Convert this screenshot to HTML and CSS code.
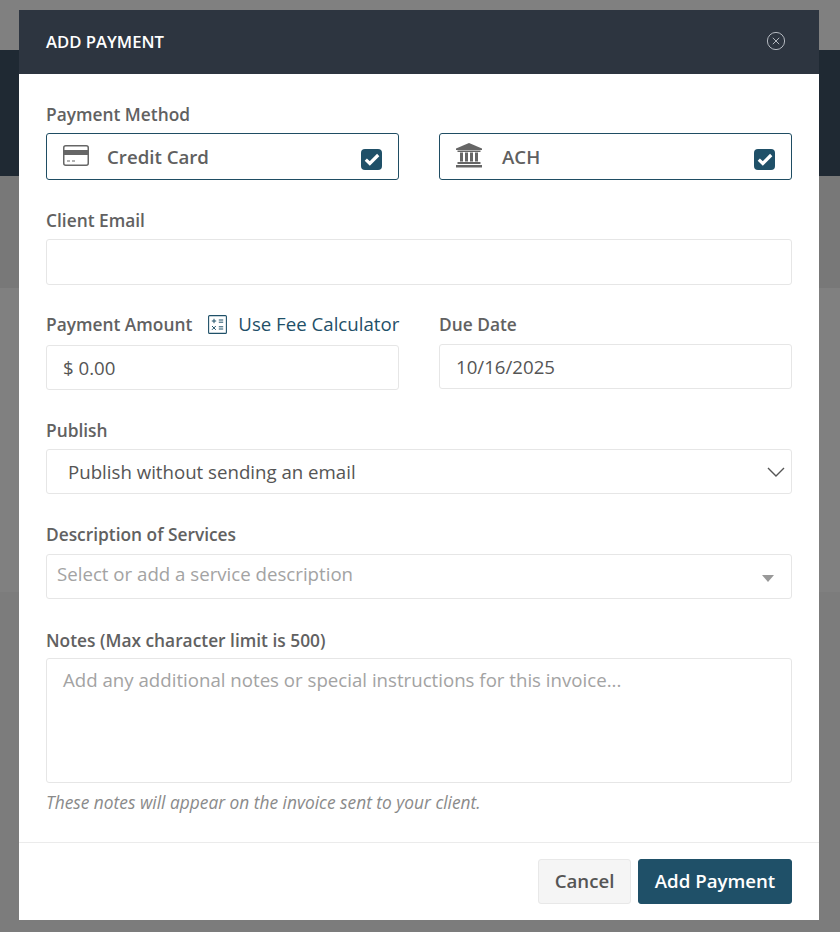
FILE: index.html
```html
<!DOCTYPE html>
<html lang="en">
<head>
<meta charset="utf-8">
<title>Add Payment</title>
<link rel="stylesheet" href="styles.css">
</head>
<body>
<div class="backdrop">
  <div class="bg-top"></div>
  <div class="bg-hero"></div>
  <div class="bg-mid"></div>
  <div class="bg-main"></div>
  <div class="bg-bottom"></div>
</div>
<div class="modal">
  <header class="modal-head">
    <h1>ADD PAYMENT</h1>
    <svg class="close" width="20" height="20" viewBox="0 0 20 20" fill="none" stroke="#b4b9c0"><circle cx="10" cy="10" r="8.6" stroke-width="1"/><path d="M6.8 6.8l6.4 6.4M13.2 6.8l-6.4 6.4" stroke-width="1"/></svg>
  </header>
  <div class="modal-body">
    <div class="label l-method">Payment Method</div>
    <div class="two">
      <div class="method">
        <svg class="m-icon" width="26" height="21" viewBox="0 0 26 21"><rect x="0.75" y="0.75" width="24.5" height="19.5" rx="2" fill="none" stroke="#666" stroke-width="1.5"/><rect x="1" y="5" width="24" height="5" fill="#666"/><path d="M4 16h3M9 16h3" stroke="#666" stroke-width="1.2"/></svg>
        <span class="m-name m-card">Credit Card</span>
        <span class="check"><svg width="16" height="13" viewBox="0 0 16 13"><path d="M1.8 6.6l4 3.8 8.400-8.400" fill="none" stroke="#fff" stroke-width="3.200"/></svg></span>
      </div>
      <div class="method">
        <svg class="m-icon" width="26" height="25" viewBox="0 0 26 25" fill="#666"><path d="M13 0L26 5.500V7H0V5.500z"/><rect x="1.500" y="7.500" width="23" height="1.500"/><rect x="4" y="9.500" width="3" height="9"/><rect x="9" y="9.500" width="3" height="9"/><rect x="14" y="9.500" width="3" height="9"/><rect x="19" y="9.500" width="3" height="9"/><rect x="1.500" y="19" width="23" height="2"/><rect x="0" y="22" width="26" height="2.500"/></svg>
        <span class="m-name m-ach">ACH</span>
        <span class="check"><svg width="16" height="13" viewBox="0 0 16 13"><path d="M1.800 6.600l4 3.800 8.400-8.400" fill="none" stroke="#fff" stroke-width="3.200"/></svg></span>
      </div>
    </div>
    <div class="label l-email">Client Email</div>
    <div class="field email"></div>
    <div class="two amount-row">
      <div>
        <div class="label-row">
          <span class="label">Payment Amount</span>
          <svg class="calc" width="19" height="19" viewBox="0 0 19 19" fill="none" stroke="#1f5068"><rect x="0.600" y="0.600" width="17.800" height="17.800" rx="1" stroke-width="1.100"/><path d="M3.800 6h4.400M6 3.800v4.400M10.800 5h4.400M10.800 7.200h4.400M4 11l3.800 3.800M7.800 11l-3.800 3.800M10.800 11.800h4.400M10.800 14h4.400" stroke-width="1"/></svg>
          <span class="link">Use Fee Calculator</span>
        </div>
        <div class="field text amount">$ 0.00</div>
      </div>
      <div>
        <div class="label due">Due Date</div>
        <div class="field text date">10/16/2025</div>
      </div>
    </div>
    <div class="label l-publish">Publish</div>
    <div class="field text select">
      <span>Publish without sending an email</span>
      <svg width="18" height="10" viewBox="0 0 18 10"><path d="M1 1l8 8 8-8" fill="none" stroke="#555" stroke-width="1.400"/></svg>
    </div>
    <div class="label l-desc">Description of Services</div>
    <div class="field text combo">
      <span class="combo-text">Select or add a service description</span>
      <i class="caret"></i>
    </div>
    <div class="label l-notes">Notes (Max character limit is 500)</div>
    <div class="field text notes">Add any additional notes or special instructions for this invoice...</div>
    <p class="hint">These notes will appear on the invoice sent to your client.</p>
  </div>
  <footer class="modal-foot">
    <button class="btn cancel">Cancel</button>
    <button class="btn primary">Add Payment</button>
  </footer>
</div>
</body>
</html>
```
FILE: styles.css
```css
* { box-sizing: border-box; }
html, body { margin: 0; height: 932px; overflow: hidden; }
body { font-family: "Open Sans", sans-serif; color: #555; position: relative; background: #808080; }
.backdrop { position: absolute; inset: 0; display: flex; flex-direction: column; }
.bg-top { height: 50px; background: #808080; }
.bg-hero { height: 126px; background: #1f2933; }
.bg-mid { height: 112px; background: #787878; }
.bg-main { height: 304px; background: #808080; }
.bg-bottom { flex: 1; background: #7c7c7c; }

.modal { position: absolute; left: 19px; top: 10px; width: 800px; height: 910px; background: #fff; display: flex; flex-direction: column; }
.modal-head { height: 64px; background: #2d3540; display: flex; align-items: center; justify-content: space-between; padding: 0 33px 0 27px; flex: none; }
.modal-head h1 { margin: 0; color: #fff; font-size: 16.67px; font-weight: 600; line-height: 22px; }
.close { display: block; margin-top: -2px; }

.modal-body { flex: 1; padding: 0 27px; }
.label { font-size: 17.33px; font-weight: 600; line-height: 22px; color: #616161; white-space: nowrap; }
.l-method { margin-top: 29px; }
.two { display: grid; grid-template-columns: 353px 353px; column-gap: 40px; }
.method { height: 47px; margin-top: 8px; border: 1px solid #1f4d63; border-radius: 3px; display: flex; align-items: flex-start; padding-left: 16px; position: relative; }
.m-icon { display: block; flex: none; margin-top: 11px; }
.m-name { font-size: 18.67px; font-weight: 600; line-height: 24px; color: #606060; margin-top: 11px; }
.m-card { margin-left: 18px; }
.m-ach { margin-left: 20px; }
.method:nth-child(2) .m-icon { margin-top: 9px; }
.check { position: absolute; right: 16px; top: 15px; width: 21px; height: 21px; background: #1f5068; border-radius: 4px; display: flex; align-items: center; justify-content: center; }
.check svg { display: block; }

.l-email { margin-top: 29px; }
.field { height: 46px; margin-top: 7px; border: 1px solid #e6e6e6; border-radius: 3px; background: #fff; }
.email { margin-top: 8px; }
.text { font-size: 18.67px; line-height: 24px; color: #555; display: flex; align-items: center; padding: 0 16px; }
.amount-row { margin-top: 28px; }
.label-row { display: flex; align-items: center; height: 22px; }
.calc { margin-left: 16px; flex: none; margin-top: 1px; }
.link { font-size: 18.67px; line-height: 22px; color: #1f5068; margin-left: 11px; white-space: nowrap; }
.amount { height: 45px; margin-top: 10px; }
.due { margin-top: 0; }
.date { height: 45px; margin-top: 9px; }
.l-publish { margin-top: 29px; }
.select { height: 45px; margin-top: 8px; padding: 0 6px 0 21px; justify-content: space-between; }
.l-desc { margin-top: 29px; }
.combo { height: 45px; margin-top: 9px; padding: 0 17px 0 10px; justify-content: space-between; color: #a3a3a3; }
.combo-text { margin-top: -6px; }
.caret { width: 0; height: 0; border: 6px solid transparent; border-top: 7px solid #999; border-bottom: 0; display: block; margin-top: 3px; }
.l-notes { margin-top: 30px; }
.notes { height: 125px; margin-top: 7px; align-items: flex-start; padding-top: 9px; color: #a3a3a3; }
.hint { margin: 8px 0 0; font-size: 17.33px; line-height: 22px; font-style: italic; color: #8a8a8a; }

.modal-foot { flex: none; height: 78px; border-top: 1px solid #ebebeb; display: flex; justify-content: flex-end; gap: 7px; padding: 16px 27px 0 0; }
.btn { height: 45px; border-radius: 3px; font-family: inherit; font-size: 18.67px; font-weight: 600; line-height: 24px; padding: 0 0 2px; cursor: pointer; }
.cancel { width: 93px; background: #f5f5f5; border: 1px solid #e8e8e8; color: #555; }
.primary { width: 154px; background: #1f5068; border: 1px solid #1f5068; color: #fff; }
```
